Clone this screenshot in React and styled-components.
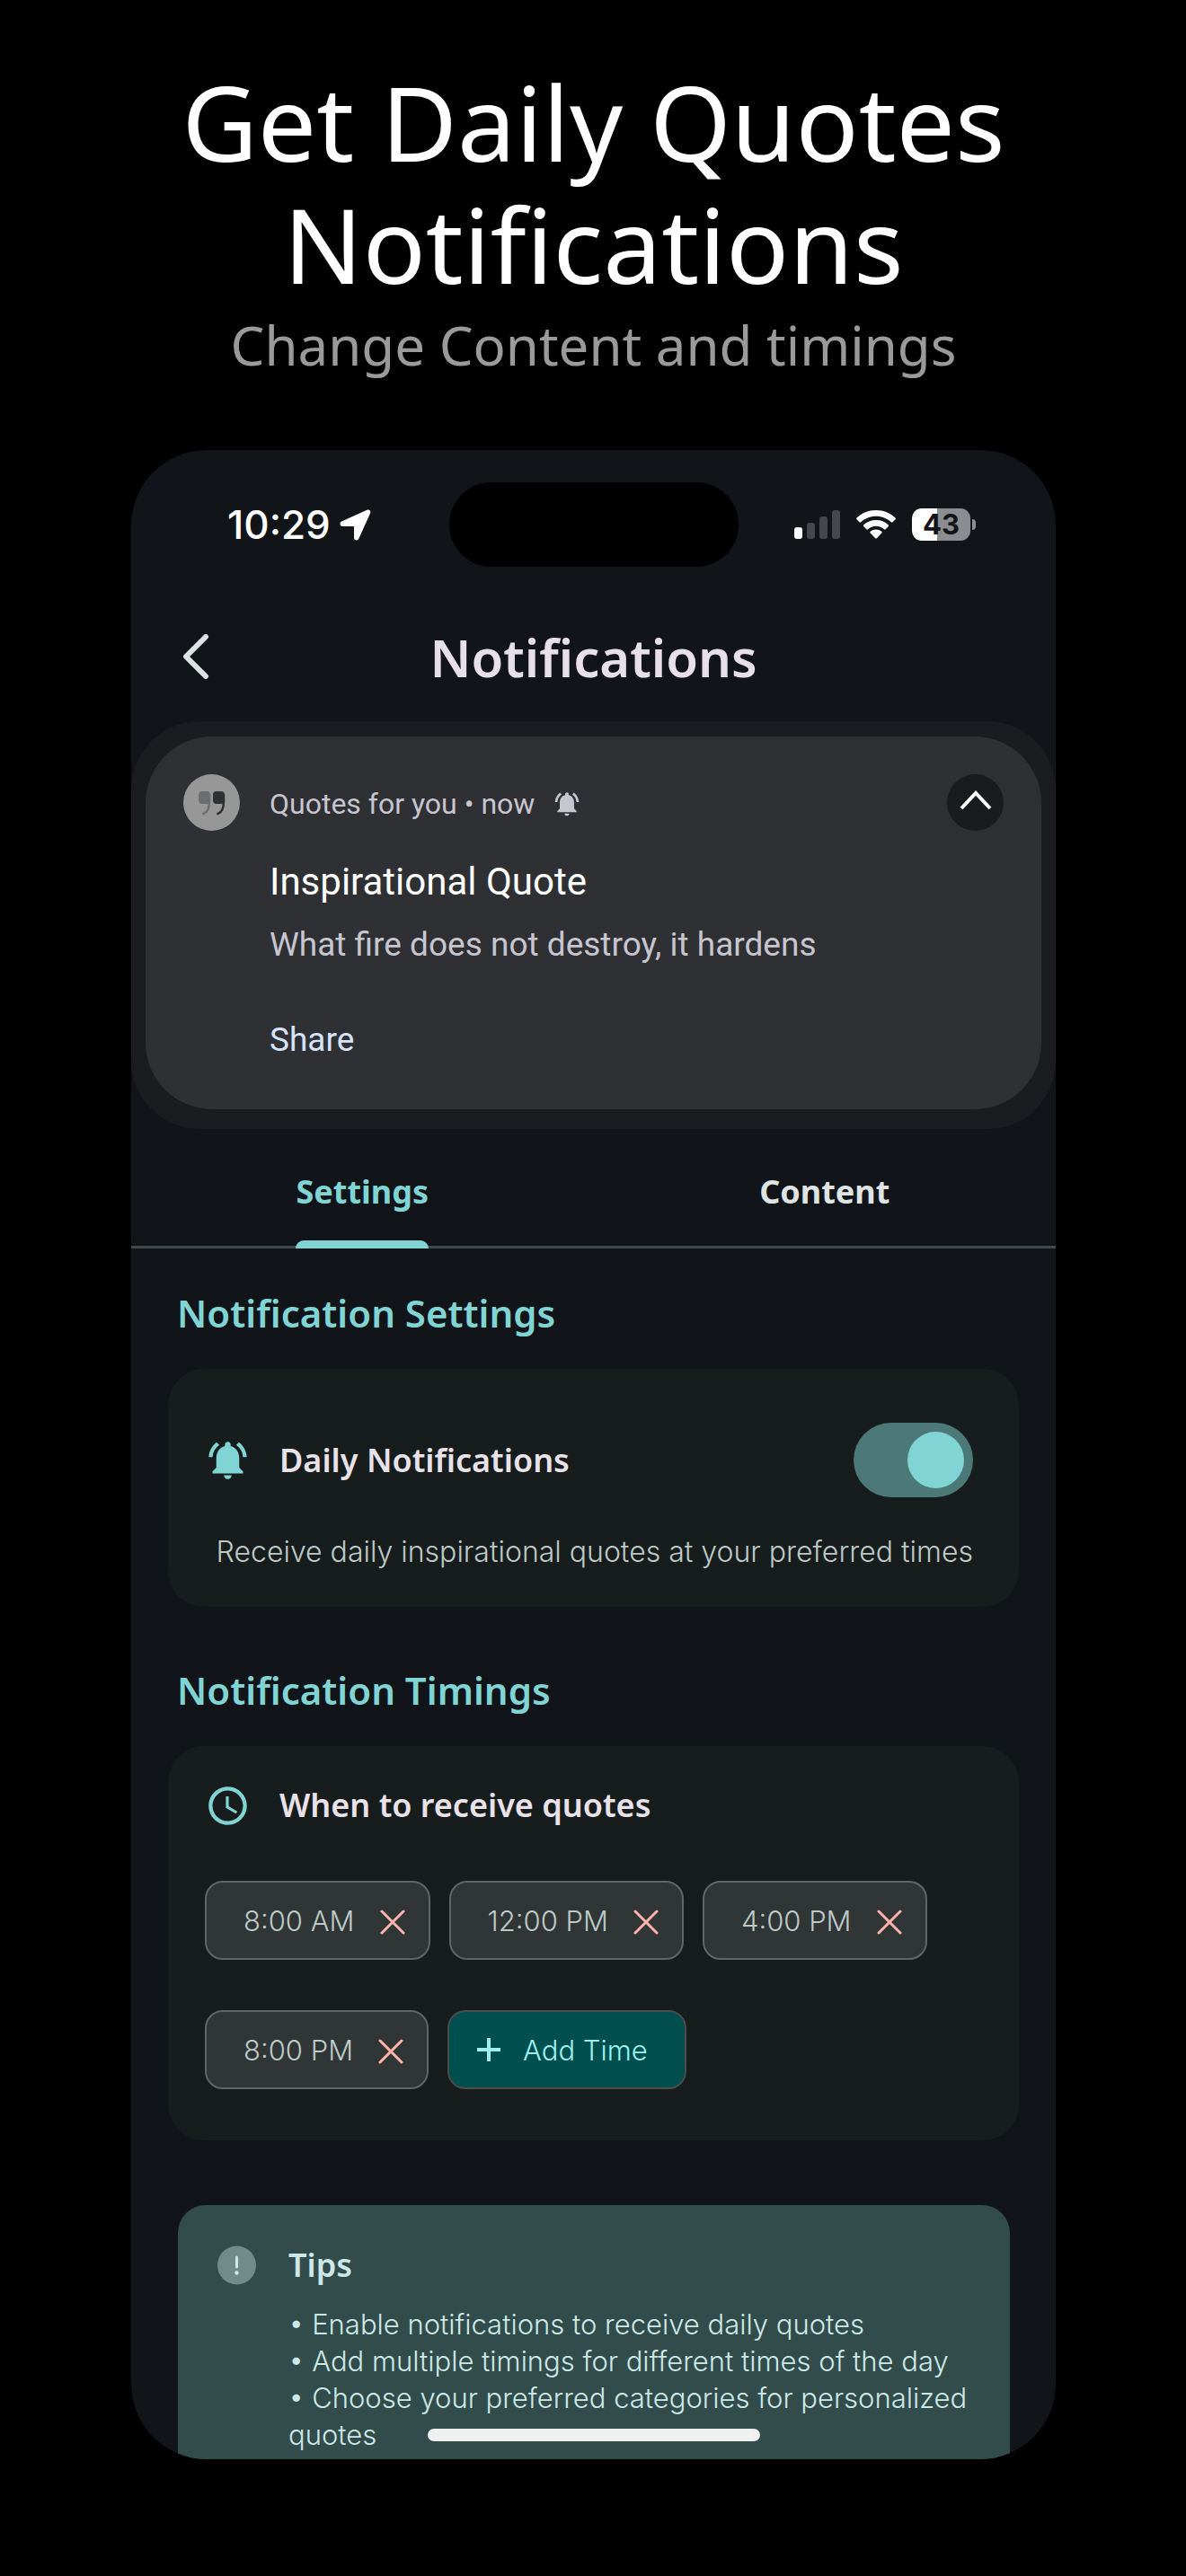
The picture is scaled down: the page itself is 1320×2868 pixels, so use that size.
import React from "react";
import styled, { createGlobalStyle } from "styled-components";
import { MdNotificationsActive, MdAccessTime } from "react-icons/md";

const GlobalStyle = createGlobalStyle`
  * {
    box-sizing: border-box;
  }
  body {
    margin: 0;
    background: #000;
  }
  h1, h2, h3, p, ul {
    margin: 0;
    padding: 0;
    font-weight: 400;
  }
  button {
    font: inherit;
    color: inherit;
    border: 0;
    padding: 0;
    background: none;
    cursor: pointer;
  }
`;

const Page = styled.main`
  --color-primary: #80d5d4;
  --color-screen: #111418;
  --color-card: #161d1c;
  --color-title: #eae2ea;
  min-height: 100vh;
  padding: 67px 145px 130px 146px;
  color: #dee4e3;
  font-family: "Noto Sans", sans-serif;
`;

const Hero = styled.header`
  text-align: center;
  margin-bottom: 71px;
`;
const HeroTitle = styled.h1`
  color: #fff;
  font-size: 116px;
  line-height: 136px;
`;
const HeroSubtitle = styled.p`
  color: #9a9a9a;
  font-size: 60px;
  line-height: 91px;
`;

const Phone = styled.section`
  position: relative;
  overflow: hidden;
  border-radius: 84px;
  background: var(--color-screen);
`;

const StatusBar = styled.div`
  display: grid;
  grid-template-columns: 1fr 322px 1fr;
  align-items: center;
  padding: 36px 89px 0;
  color: #fff;
  font-family: Inter, sans-serif;
`;
const Island = styled.div`
  height: 94px;
  border-radius: 47px;
  background: #000;
`;
const Clock = styled.div`
  display: flex;
  align-items: center;
  gap: 10px;
  padding-left: 18px;
  font-size: 44px;
  font-weight: 500;
`;
const StatusIcons = styled.div`
  display: flex;
  align-items: center;
  justify-content: flex-end;
  gap: 18px;
`;
const Battery = styled.div`
  display: flex;
  align-items: center;
  gap: 2px;
`;
const BatteryLevel = styled.span`
  width: 65px;
  height: 36px;
  border-radius: 11px;
  background: linear-gradient(90deg, #fff 43%, #8c8d90 43%);
  color: var(--color-screen);
  font-size: 31px;
  font-weight: 700;
  line-height: 36px;
  text-align: center;
`;
const BatteryTip = styled.span`
  width: 4px;
  height: 12px;
  border-radius: 0 4px 4px 0;
  background: #8c8d90;
`;

const TitleBar = styled.div`
  display: grid;
  grid-template-columns: 80px 1fr 80px;
  align-items: center;
  height: 172px;
  padding: 28px 32px 0;
`;
const BackButton = styled.button`
  display: grid;
  place-items: center;
  height: 80px;
`;
const Title = styled.h2`
  color: #e8e0e8;
  font-size: 58px;
  font-weight: 600;
  text-align: center;
`;

const NotificationTray = styled.div`
  padding: 17px 16px 22px;
  border-radius: 76px;
  background: #1b1c1f;
`;
const Notification = styled.article`
  display: grid;
  grid-template-columns: 63px 1fr 63px;
  column-gap: 33px;
  padding: 42px 42px 45px;
  border-radius: 74px;
  background: #2f3033;
  font-family: Roboto, sans-serif;
`;
const NotificationBody = styled.div`
  color: #c7c6d0;
`;
const Source = styled.p`
  display: flex;
  align-items: center;
  gap: 20px;
  height: 66px;
  font-size: 32px;
`;
const QuoteTitle = styled.h3`
  margin-top: 22px;
  color: #fff;
  font-size: 42px;
  line-height: 64px;
`;
const QuoteText = styled.p`
  font-size: 37px;
  line-height: 76px;
`;
const ShareButton = styled.button`
  margin-top: 36px;
  color: #d6e3ff;
  font-size: 37px;
  line-height: 64px;
`;
const CollapseButton = styled.button`
  display: grid;
  place-items: center;
  width: 63px;
  height: 63px;
  border-radius: 50%;
  background: #1a1b1e;
`;

const Tabs = styled.nav`
  display: grid;
  grid-template-columns: 1fr 1fr;
  justify-items: center;
  margin-bottom: 46px;
  border-bottom: 3px solid #3f4948;
`;
const Tab = styled.button`
  display: flex;
  flex-direction: column;
  align-items: center;
  margin-bottom: -3px;
  padding-top: 45px;
  color: ${(props) => (props.$active ? "var(--color-primary)" : "inherit")};
  font-size: 36px;
  font-weight: 700;
  line-height: 50px;

  &::after {
    content: "";
    flex: 0 0 9px;
    width: 100%;
    margin-top: 29px;
    border-radius: 9px 9px 0 0;
    background: ${(props) => (props.$active ? "currentColor" : "none")};
  }
`;

const SectionTitle = styled.h3`
  padding: 0 51px;
  color: var(--color-primary);
  font-size: 42px;
  font-weight: 600;
  line-height: 52px;
`;
const Card = styled.section`
  margin: 36px 41px 67px;
  padding: ${(props) => (props.$tall ? "38px 41px 57px" : "60px 51px 36px 41px")};
  border-radius: 40px;
  background: var(--color-card);
`;
const CardRow = styled.div`
  display: flex;
  align-items: center;
  gap: 32px;
  > svg {
    flex: none;
    color: var(--color-primary);
    font-size: 51px;
  }
`;
const CardLabel = styled.label`
  flex: 1;
  color: var(--color-title);
  font-size: 36px;
  font-weight: 600;
  line-height: 56px;
`;
const CardHint = styled.p`
  margin-top: 36px;
  color: #bec9c8;
  font-family: Inter, sans-serif;
  font-size: 32px;
  font-weight: 300;
  line-height: 50px;
  text-align: right;
`;

const Switch = styled.input`
  appearance: none;
  display: flex;
  justify-content: flex-start;
  width: 133px;
  height: 83px;
  margin: 0;
  padding: 10px;
  border-radius: 42px;
  background: #3f4948;
  cursor: pointer;

  &::before {
    content: "";
    width: 63px;
    height: 63px;
    border-radius: 50%;
    background: var(--color-primary);
  }
  &:checked {
    justify-content: flex-end;
    background: #4c7878;
  }
`;

const TimeList = styled.ul`
  display: flex;
  flex-wrap: wrap;
  gap: 56px 21px;
  margin-top: 56px;
  list-style: none;
`;
const TimeChip = styled.li`
  display: flex;
  align-items: center;
  gap: 28px;
  height: 88px;
  padding: 0 26px 0 41px;
  border: 2px solid #5f6665;
  border-radius: 20px;
  background: #2f3635;
  color: #bec9c8;
  font-family: Inter, sans-serif;
  font-size: 31px;
  font-weight: 300;
`;
const RemoveButton = styled.button`
  display: flex;
  padding-top: 4px;
`;
const AddButton = styled.button`
  display: flex;
  align-items: center;
  gap: 24px;
  height: 88px;
  padding: 0 41px 0 30px;
  border: 2px solid #494d4c;
  border-radius: 20px;
  background: #004f4f;
  color: #9cf1f0;
  font-family: Inter, sans-serif;
  font-size: 31px;
  font-weight: 300;
`;

const TipsCard = styled.aside`
  display: grid;
  grid-template-columns: 43px 1fr;
  column-gap: 36px;
  margin: 72px 51px 0 52px;
  padding: 42px 40px 7px 44px;
  border-radius: 31px 31px 0 0;
  background: #324b4b;
  color: #cce8e7;
`;
const TipsTitle = styled.h3`
  font-size: 36px;
  font-weight: 600;
  line-height: 50px;
`;
const TipsList = styled.ul`
  margin-top: 20px;
  list-style: none;
  font-family: Inter, sans-serif;
  font-size: 31px;
  font-weight: 300;
  line-height: 41px;
`;
const HomeIndicator = styled.div`
  position: absolute;
  bottom: 20px;
  left: 50%;
  width: 370px;
  height: 14px;
  border-radius: 7px;
  background: #f0f0f0;
  transform: translateX(-50%);
`;

const LocationArrow = () => (
  <svg width="35" height="35" viewBox="0 0 35 35" fill="#fff">
    <path d="M30.5.8 2.2 13.6C-.4 14.8.3 19 3.3 19h11.9c.6 0 .8.3.8.8v12c0 3 4 3.7 5.3 1L34 4.600C35.2 2 33-.3 30.5.8Z" />
  </svg>
);

const SignalIcon = () => (
  <svg width="51" height="32" viewBox="0 0 51 32" fill="#46474b">
    <rect x="0" y="19" width="9" height="13" rx="3" fill="#fff" />
    <rect x="14" y="14" width="9" height="18" rx="3" />
    <rect x="28" y="7" width="9" height="25" rx="3" />
    <rect x="42" y="0" width="9" height="32" rx="3" />
  </svg>
);

const WifiIcon = () => (
  <svg width="44" height="32" viewBox="0 0 44 32" fill="#fff">
    <path d="M22 0C13.6 0 6 3.3.5 8.6c-.5.5-.5 1.2 0 1.7l3 3c.5.5 1.2.5 1.7 0C9.600 9.3 15.5 6.800 22 6.800s12.4 2.5 16.8 6.5c.5.5 1.2.5 1.7 0l3-3c.5-.5.5-1.2 0-1.700C38 3.300 30.4 0 22 0Z" />
    <path d="M22 11c-5.300 0-10.200 2-13.800 5.400-.5.5-.5 1.200 0 1.700l3.100 3.100c.5.5 1.200.5 1.700 0a13.200 13.200 0 0 1 18 0c.5.5 1.200.5 1.700 0l3.100-3.100c.5-.5.5-1.200 0-1.700A20 20 0 0 0 22 11Z" />
    <path d="M22 21.500c-2.400 0-4.600.9-6.300 2.300-.5.5-.5 1.200 0 1.700l5.500 5.700c.4.5 1.100.5 1.600 0l5.500-5.700c.5-.5.5-1.200 0-1.700a9.600 9.600 0 0 0-6.300-2.300Z" />
  </svg>
);

const BackIcon = () => (
  <svg width="30" height="50" viewBox="0 0 30 50" fill="none">
    <path
      d="M26 3 4 25l22 22"
      stroke="#dee4e3"
      strokeWidth="6"
      strokeLinecap="round"
      strokeLinejoin="round"
    />
  </svg>
);

const AppIcon = () => (
  <svg width="63" height="63" viewBox="0 0 63 63">
    <circle cx="31.5" cy="31.5" r="31.5" fill="#979797" />
    <rect x="17" y="19" width="13" height="14" rx="4" fill="#6c6e72" />
    <path
      d="M29 23v7c0 8-2 12.5-6.500 14"
      fill="none"
      stroke="#6c6e72"
      strokeWidth="2.5"
      strokeLinecap="round"
    />
    <rect x="33" y="19" width="13" height="14" rx="4" fill="#2f3033" />
    <path
      d="M45 23v7c0 8-2 12.5-6.500 14"
      fill="none"
      stroke="#2f3033"
      strokeWidth="2.5"
      strokeLinecap="round"
    />
  </svg>
);

const ChevronUp = () => (
  <svg width="36" height="36" viewBox="0 0 36 36" fill="none">
    <path d="M2 24 18 7l16 17" stroke="#fff" strokeWidth="4" />
  </svg>
);

const CloseIcon = () => (
  <svg width="28" height="28" viewBox="0 0 28 28" fill="none">
    <path
      d="M2 2l24 24M26 2 2 26"
      stroke="#ffb4ab"
      strokeWidth="3"
      strokeLinecap="round"
    />
  </svg>
);

const PlusIcon = () => (
  <svg width="28" height="28" viewBox="0 0 28 28" fill="none">
    <path d="M14 1v26M1 14h26" stroke="#9cf1f0" strokeWidth="4" />
  </svg>
);

const TipIcon = () => (
  <svg width="43" height="50" viewBox="0 0 43 50">
    <circle cx="21.5" cy="25" r="21.5" fill="#6f8b8a" />
    <path
      d="M21.5 16v11"
      stroke="#cce8e7"
      strokeWidth="3"
      strokeLinecap="round"
    />
    <circle cx="21.5" cy="33.5" r="2.2" fill="#cce8e7" />
  </svg>
);

const times = ["8:00 AM", "12:00 PM", "4:00 PM", "8:00 PM"];

function App() {
  return (
    <Page>
      <GlobalStyle />
      <Hero>
        <HeroTitle>
          Get Daily Quotes
          <br />
          Notifications
        </HeroTitle>
        <HeroSubtitle>Change Content and timings</HeroSubtitle>
      </Hero>
      <Phone>
        <StatusBar>
          <Clock>
            10:29
            <LocationArrow />
          </Clock>
          <Island />
          <StatusIcons>
            <SignalIcon />
            <WifiIcon />
            <Battery>
              <BatteryLevel>43</BatteryLevel>
              <BatteryTip />
            </Battery>
          </StatusIcons>
        </StatusBar>
        <TitleBar>
          <BackButton aria-label="Back">
            <BackIcon />
          </BackButton>
          <Title>Notifications</Title>
        </TitleBar>

        <NotificationTray>
          <Notification>
            <AppIcon />
            <NotificationBody>
              <Source>
                Quotes for you • now
                <MdNotificationsActive />
              </Source>
              <QuoteTitle>Inspirational Quote</QuoteTitle>
              <QuoteText>What fire does not destroy, it hardens</QuoteText>
              <ShareButton>Share</ShareButton>
            </NotificationBody>
            <CollapseButton aria-label="Collapse">
              <ChevronUp />
            </CollapseButton>
          </Notification>
        </NotificationTray>

        <Tabs>
          <Tab $active>Settings</Tab>
          <Tab>Content</Tab>
        </Tabs>

        <SectionTitle>Notification Settings</SectionTitle>
        <Card>
          <CardRow>
            <MdNotificationsActive />
            <CardLabel htmlFor="daily">Daily Notifications</CardLabel>
            <Switch id="daily" type="checkbox" role="switch" defaultChecked />
          </CardRow>
          <CardHint>
            Receive daily inspirational quotes at your preferred times
          </CardHint>
        </Card>

        <SectionTitle>Notification Timings</SectionTitle>
        <Card $tall>
          <CardRow>
            <MdAccessTime />
            <CardLabel as="p">When to receive quotes</CardLabel>
          </CardRow>
          <TimeList>
            {times.map((time) => (
              <TimeChip key={time}>
                {time}
                <RemoveButton aria-label={`Remove ${time}`}>
                  <CloseIcon />
                </RemoveButton>
              </TimeChip>
            ))}
            <li>
              <AddButton>
                <PlusIcon />
                Add Time
              </AddButton>
            </li>
          </TimeList>
        </Card>

        <TipsCard>
          <TipIcon />
          <div>
            <TipsTitle>Tips</TipsTitle>
            <TipsList>
              <li>• Enable notifications to receive daily quotes</li>
              <li>• Add multiple timings for different times of the day</li>
              <li>• Choose your preferred categories for personalized quotes</li>
            </TipsList>
          </div>
        </TipsCard>
        <HomeIndicator />
      </Phone>
    </Page>
  );
}

export default App;
